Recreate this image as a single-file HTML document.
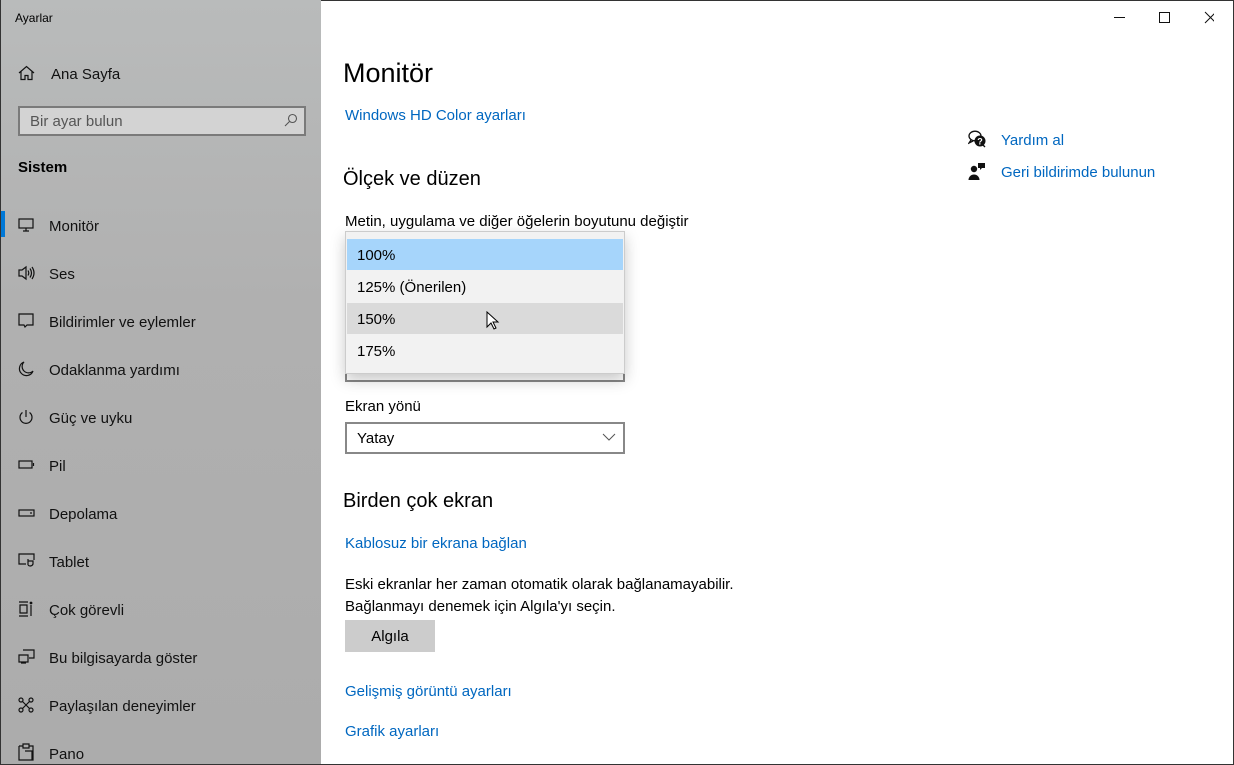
<!DOCTYPE html>
<html><head><meta charset="utf-8"><style>
*{margin:0;padding:0;box-sizing:border-box}
body{width:1234px;height:765px;overflow:hidden;font-family:"Segoe UI","Liberation Sans",sans-serif;background:#fff;position:relative;color:#000}
.side{position:absolute;left:0;top:0;width:321px;height:765px;background:linear-gradient(180deg,#b9bbbb 0%,#b0b0b0 40%,#acacac 100%);border-left:1px solid #333;border-bottom:1px solid #333}
.abs{position:absolute;white-space:nowrap}
.t{margin-top:2px}
.nav{position:absolute;left:48px;font-size:15px;color:#111;margin-top:2px}
.ic{position:absolute;left:17px}
.link{color:#0067c0;font-size:15px}
.main{position:absolute;left:321px;top:0;right:0;bottom:0;border-right:1px solid #333;border-top:1px solid #333;border-bottom:1px solid #333}
</style></head><body>
<div class="side">
 <div class="abs t" style="left:14px;top:9px;font-size:12px">Ayarlar</div>
 <svg class="ic" style="top:65px" width="17" height="16" viewBox="0 0 17 16" fill="none" stroke="#111" stroke-width="1.2"><path d="M1 8L8.5 1.5 16 8M3 6.5V14.5h4V10.5h3v4h4V6.5"/></svg>
 <div class="nav" style="left:50px;top:64px;font-size:15px">Ana Sayfa</div>
 <div class="abs" style="left:17px;top:106px;width:288px;height:30px;background:#d3d3d3;border:2px solid #7a7a7a"></div>
 <div class="abs t" style="left:29px;top:111px;font-size:15px;color:#555">Bir ayar bulun</div>
 <svg class="abs" style="left:283px;top:113px" width="14" height="14" viewBox="0 0 14 14" fill="none" stroke="#555" stroke-width="1.1"><circle cx="8.5" cy="5.5" r="4"/><path d="M5.5 8.5L1 13"/></svg>
 <div class="abs t" style="left:17px;top:157px;font-size:15px;font-weight:bold">Sistem</div>
 <div class="abs" style="left:0;top:211px;width:4px;height:26px;background:#0078d7"></div>
 <svg class="ic" style="top:218px" width="16" height="14" viewBox="0 0 16 14" fill="none" stroke="#111" stroke-width="1.2"><rect x="1" y="1" width="14" height="9"/><path d="M8 10v3M5 13h6"/></svg>
 <div class="nav" style="top:216px">Monitör</div>
 <svg class="ic" style="top:265px" width="17" height="16" viewBox="0 0 17 16" fill="none" stroke="#111" stroke-width="1.2"><path d="M1 5h3l4-3v12l-4-3H1z M10 5.5q1.5 2.5 0 5 M12 3.5q3 4.5 0 9 M14 2q4 6 0 12"/></svg>
 <div class="nav" style="top:264px">Ses</div>
 <svg class="ic" style="top:313px" width="16" height="16" viewBox="0 0 16 16" fill="none" stroke="#111" stroke-width="1.2"><path d="M1 1h14v11H9l-2 2-1-2H1z"/></svg>
 <div class="nav" style="top:312px">Bildirimler ve eylemler</div>
 <svg class="ic" style="top:361px" width="16" height="16" viewBox="0 0 16 16" fill="none" stroke="#111" stroke-width="1.2"><path d="M6 1A7 7 0 1 0 15 10 6 6 0 0 1 6 1z"/></svg>
 <div class="nav" style="top:360px">Odaklanma yardımı</div>
 <svg class="ic" style="top:409px" width="16" height="16" viewBox="0 0 16 16" fill="none" stroke="#111" stroke-width="1.2"><path d="M8 1v7M4.5 3.5a6 6 0 1 0 7 0"/></svg>
 <div class="nav" style="top:408px">Güç ve uyku</div>
 <svg class="ic" style="top:460px" width="17" height="10" viewBox="0 0 17 10" fill="none" stroke="#111" stroke-width="1.2"><rect x="1" y="1" width="13" height="7"/><path d="M15.5 3v3"/></svg>
 <div class="nav" style="top:456px">Pil</div>
 <svg class="ic" style="top:508px" width="17" height="10" viewBox="0 0 17 10" fill="none" stroke="#111" stroke-width="1.2"><rect x="1" y="2" width="15" height="6"/><path d="M12 5h2"/></svg>
 <div class="nav" style="top:504px">Depolama</div>
 <svg class="ic" style="top:553px" width="17" height="16" viewBox="0 0 17 16" fill="none" stroke="#111" stroke-width="1.2"><path d="M8 11H1V1h15v6"/><path d="M10 6v6M10 8h5v3a3 3 0 0 1-5 1"/></svg>
 <div class="nav" style="top:552px">Tablet</div>
 <svg class="ic" style="top:601px" width="16" height="16" viewBox="0 0 16 16" fill="none" stroke="#111" stroke-width="1.2"><path d="M1 1h9M1 15h9M2 4h7v8H2zM13 4v11"/><circle cx="13" cy="2" r="0.8" fill="#111"/></svg>
 <div class="nav" style="top:600px">Çok görevli</div>
 <svg class="ic" style="top:649px" width="17" height="16" viewBox="0 0 17 16" fill="none" stroke="#111" stroke-width="1.2"><path d="M5 1h11v8h-5M1 6h9v7H1zM3 14h5"/></svg>
 <div class="nav" style="top:648px">Bu bilgisayarda göster</div>
 <svg class="ic" style="top:697px" width="16" height="16" viewBox="0 0 16 16" fill="none" stroke="#111" stroke-width="1.2"><circle cx="3" cy="3" r="2"/><circle cx="13" cy="3" r="2"/><circle cx="3" cy="13" r="2"/><circle cx="13" cy="13" r="2"/><path d="M4.5 4.5l7 7M11.5 4.5l-7 7"/></svg>
 <div class="nav" style="top:696px">Paylaşılan deneyimler</div>
 <svg class="ic" style="top:743px" width="16" height="18" viewBox="0 0 16 18" fill="none" stroke="#111" stroke-width="1.2"><path d="M1 3h4M11 3h4v14H1V3M5 1h6v4H5zM7 8h7v9"/></svg>
 <div class="nav" style="top:744px">Pano</div>
</div>
<div class="main"></div>
<svg class="abs" style="left:1114px;top:11px" width="100" height="14" viewBox="0 0 100 14" fill="none" stroke="#111" stroke-width="1"><path d="M0 6.5h11"/><rect x="45.5" y="1.5" width="10" height="10"/><path d="M91 1l11 11M102 1L91 12"/></svg>
<div class="abs t" style="left:343px;top:56px;font-size:27px;font-weight:300">Monitör</div>
<div class="abs link t" style="left:345px;top:105px">Windows HD Color ayarları</div>
<div class="abs t" style="left:343px;top:166px;font-size:20px">Ölçek ve düzen</div>
<div class="abs t" style="left:345px;top:211px;font-size:15px">Metin, uygulama ve diğer öğelerin boyutunu değiştir</div>
<div class="abs" style="left:345px;top:360px;width:280px;height:22px;border:2px solid #888;border-top:none"></div>
<div class="abs" style="left:345px;top:231px;width:280px;height:143px;background:#f2f2f2;border:1px solid #ccc;box-shadow:0 6px 14px rgba(0,0,0,.22)">
 <div class="abs" style="left:1px;top:7px;width:276px;height:31px;background:#a6d5fb"></div>
 <div class="abs" style="left:1px;top:71px;width:276px;height:31px;background:#dadada"></div>
 <div class="abs t" style="left:11px;top:13px;font-size:15px">100%</div>
 <div class="abs t" style="left:11px;top:45px;font-size:15px">125% (Önerilen)</div>
 <div class="abs t" style="left:11px;top:77px;font-size:15px">150%</div>
 <div class="abs t" style="left:11px;top:109px;font-size:15px">175%</div>
 <svg class="abs" style="left:140px;top:79px" width="14" height="20" viewBox="0 0 14 20"><path d="M1 1v15l4-4 3 6 2-1-3-6h5z" fill="#fff" stroke="#000" stroke-width="1"/></svg>
</div>
<div class="abs t" style="left:345px;top:396px;font-size:15px">Ekran yönü</div>
<div class="abs" style="left:345px;top:422px;width:280px;height:32px;border:2px solid #888;background:#fff"></div>
<div class="abs t" style="left:357px;top:428px;font-size:15px">Yatay</div>
<svg class="abs" style="left:602px;top:433px" width="14" height="8" viewBox="0 0 14 8" fill="none" stroke="#555" stroke-width="1"><path d="M1 1l6 6 6-6"/></svg>
<div class="abs t" style="left:343px;top:488px;font-size:20px">Birden çok ekran</div>
<div class="abs link t" style="left:345px;top:533px">Kablosuz bir ekrana bağlan</div>
<div class="abs t" style="left:345px;top:572px;font-size:15px;line-height:22px">Eski ekranlar her zaman otomatik olarak bağlanamayabilir.<br>Bağlanmayı denemek için Algıla'yı seçin.</div>
<div class="abs" style="left:345px;top:620px;width:90px;height:32px;background:#ccc;font-size:15px;text-align:center;line-height:34px">Algıla</div>
<div class="abs link t" style="left:345px;top:681px">Gelişmiş görüntü ayarları</div>
<div class="abs link t" style="left:345px;top:721px">Grafik ayarları</div>
<svg class="abs" style="left:968px;top:130px" width="19" height="18" viewBox="0 0 19 18"><ellipse cx="7" cy="6" rx="6" ry="4.8" fill="#fff" stroke="#111" stroke-width="1.3"/><path d="M3 10l-2 3 4-2" fill="none" stroke="#111" stroke-width="1.3"/><circle cx="12" cy="11" r="5.5" fill="#111"/><text x="12" y="14.5" font-size="9" fill="#fff" text-anchor="middle" font-family="Liberation Sans" font-weight="bold">?</text><path d="M15 15l2 2" stroke="#111" stroke-width="1.3"/></svg>
<div class="abs link t" style="left:1001px;top:130px">Yardım al</div>
<svg class="abs" style="left:968px;top:162px" width="18" height="18" viewBox="0 0 18 18" fill="#111"><circle cx="6" cy="7" r="3.2"/><path d="M0.5 18a5.5 5.5 0 0 1 11 0z"/><path d="M10 1h7v5h-3l-2 2v-2h-2z"/></svg>
<div class="abs link t" style="left:1001px;top:162px">Geri bildirimde bulunun</div>
</body></html>
